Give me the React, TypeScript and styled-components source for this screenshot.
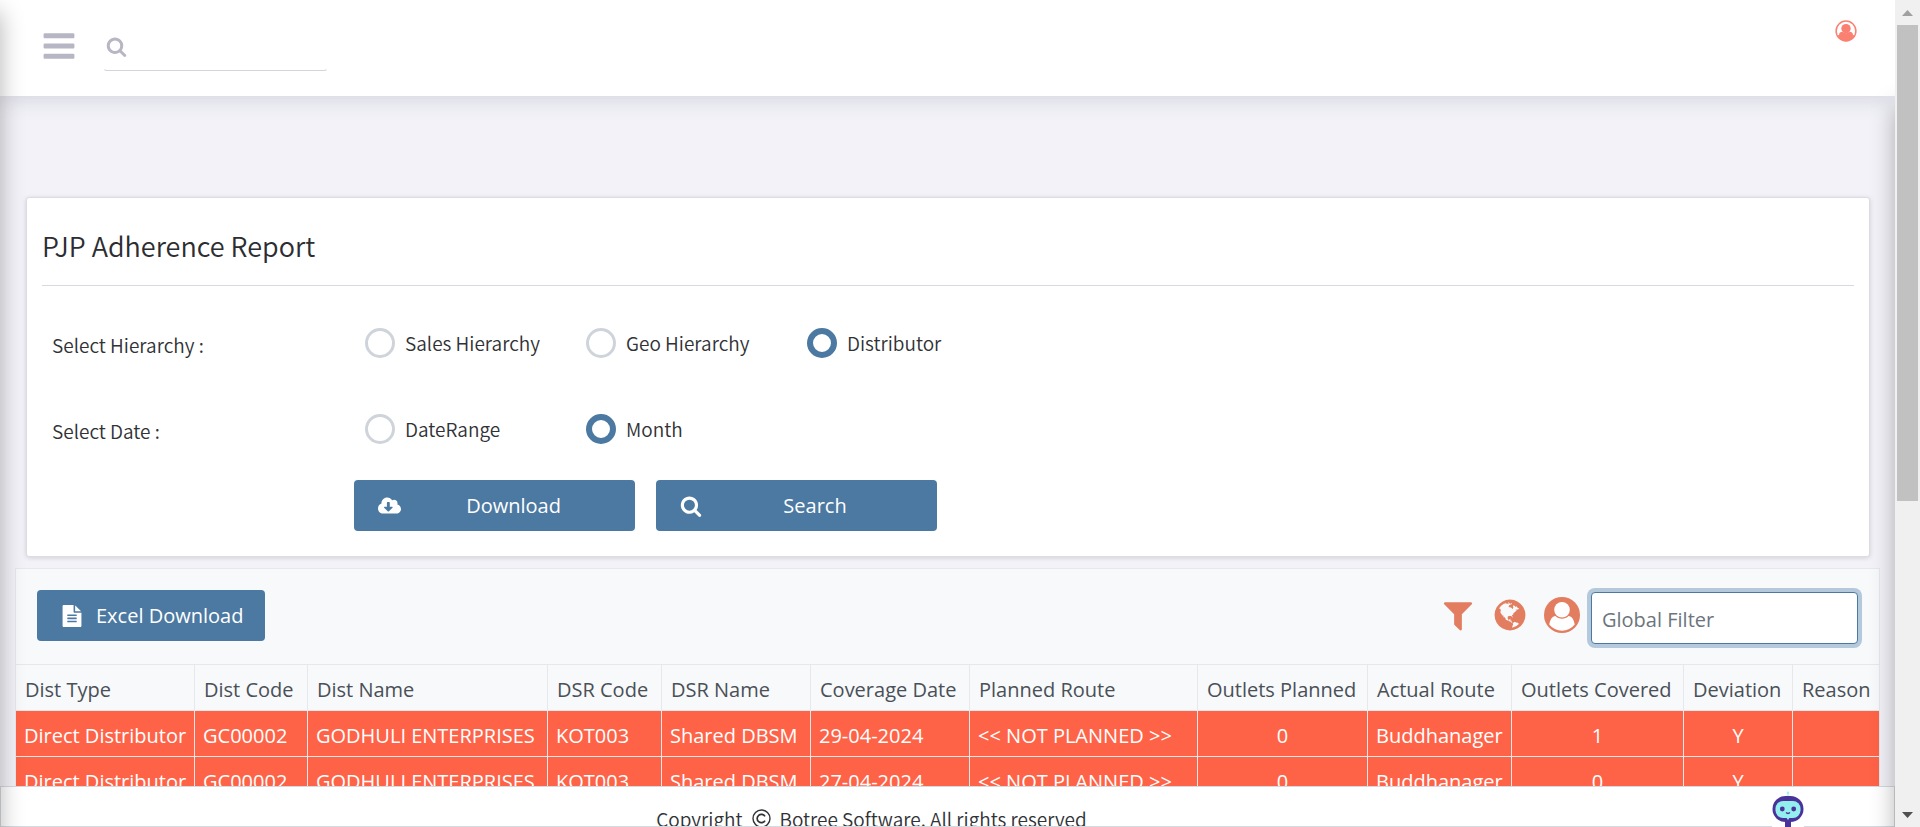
import React from 'react';
import styled, { createGlobalStyle, css } from 'styled-components';
import { FaCloudDownloadAlt } from 'react-icons/fa';

const ui = `"Open Sans", "Noto Sans", sans-serif`;
const light = `"Noto Sans CJK SC", "Noto Sans", sans-serif`;
const blue = '#4b79a1';
const coral = '#e37d5f';
const line = '#e6e8eb';

const GlobalStyle = createGlobalStyle`
  *, *::before, *::after { box-sizing: border-box; }
  body { margin: 0; font-family: ${ui}; font-size: 20px; color: #212529; background: #f2f2f8; }
  button, input { font: inherit; }
  svg { display: block; flex: none; }
`;

const Window = styled.div`
  display: flex;
  height: 100vh;
  overflow: hidden;
`;

const Page = styled.div`
  position: relative;
  flex: 1;
  min-width: 0;
  display: flex;
  flex-direction: column;
  overflow: hidden;
`;

const EdgeShade = styled.div<{ $side: 'left' | 'right' }>`
  position: absolute;
  z-index: 3;
  bottom: -40px;
  width: 40px;
  pointer-events: none;
  box-shadow: 0 0 24px rgba(0, 0, 0, 0.3);
  ${({ $side }) =>
    $side === 'left'
      ? css`
          left: -40px;
          top: 12px;
        `
      : css`
          right: -40px;
          top: 106px;
        `}
`;

const Header = styled.header`
  position: relative;
  z-index: 2;
  display: flex;
  align-items: flex-start;
  height: 96px;
  padding: 20px 38px 0 41px;
  background: #fff;
  box-shadow: 0 1px 22px rgba(69, 65, 100, 0.2);
`;

const IconButton = styled.button`
  padding: 0;
  border: 0;
  background: none;
  color: ${coral};
  cursor: pointer;
`;

const MenuButton = styled(IconButton)`
  margin-top: 8px;
  color: #b7b6c4;
`;

const ProfileButton = styled(IconButton)`
  margin-left: auto;
  color: #fa8072;
`;

const SearchBox = styled.label`
  display: flex;
  align-items: flex-end;
  width: 225px;
  height: 51px;
  margin-left: 26px;
  padding: 0 4px 13px 2px;
  border: 1px solid transparent;
  border-bottom-color: #d4d3de;
  border-radius: 4px;
  color: #b7b6c4;
`;

const SearchInput = styled.input`
  flex: 1;
  min-width: 0;
  height: 22px;
  padding: 0 8px;
  border: 0;
  outline: 0;
  background: none;
`;

const Main = styled.main`
  flex: 1;
  min-height: 0;
  overflow: hidden;
  padding: 101px 15px 0;
`;

const Card = styled.section`
  margin: 0 10px 11px 11px;
  padding: 15px 15px 25px;
  background: #fff;
  border: 1px solid #dcdce2;
  border-radius: 3px;
  box-shadow: 0 1px 5px rgba(0, 0, 0, 0.14);
`;

const Title = styled.h1`
  margin: 0 0 14px;
  padding-bottom: 6px;
  border-bottom: 1px solid #d8d9df;
  font: 350 27px/66px ${light};
  color: #2b2d31;
`;

const Field = styled.fieldset`
  display: flex;
  align-items: center;
  height: 86px;
  margin: 0;
  padding: 0 0 0 10px;
  border: 0;
  font: 350 19px/28px ${light};
  color: #303236;
`;

const FieldLabel = styled.span`
  width: 313px;
  padding-top: 4px;
`;

const Option = styled.label`
  display: flex;
  align-items: center;
  gap: 10px;
  width: 221px;
`;

const Radio = styled.input`
  appearance: none;
  width: 30px;
  height: 30px;
  margin: 0;
  border: 3px solid #ced4da;
  border-radius: 50%;
  background: #fff;
  &:checked {
    border: 6px solid ${blue};
  }
`;

const Actions = styled.div`
  display: flex;
  gap: 21px;
  margin: 8px 0 0 312px;
`;

const Button = styled.button<{ $wide?: boolean }>`
  display: flex;
  align-items: center;
  height: 51px;
  width: ${({ $wide }) => ($wide ? '281px' : 'auto')};
  padding: 0 22px 0 24px;
  border: 0;
  border-radius: 4px;
  background: ${blue};
  color: #fff;
  cursor: pointer;
`;

const ButtonLabel = styled.span`
  flex: 1;
  padding-left: 13px;
  text-align: center;
`;

const Panel = styled.section`
  background: #f8f9fb;
  border: 1px solid ${line};
`;

const Toolbar = styled.div`
  display: flex;
  align-items: center;
  height: 95px;
  padding: 0 21px 2px;
`;

const Tools = styled.div`
  display: flex;
  align-items: center;
  gap: 16px;
  margin: 0 11px 2px auto;
`;

const FilterInput = styled.input`
  width: 267px;
  height: 52px;
  margin-top: 4px;
  padding: 4px 10px 0;
  border: 1px solid ${blue};
  border-radius: 4px;
  outline: 0;
  background: #fff;
  box-shadow: 0 0 0 4px #b4c9dc;
  &::placeholder {
    color: #6c757d;
    opacity: 1;
  }
`;

const Table = styled.table`
  width: 100%;
  table-layout: fixed;
  border-collapse: separate;
  border-spacing: 0;
`;

const cell = css`
  height: 46px;
  padding: 4px 8px 0 9px;
  white-space: nowrap;
  border-right: 1px solid ${line};
  border-bottom: 1px solid ${line};
  &:last-child {
    border-right: 0;
  }
`;

const Th = styled.th`
  ${cell}
  border-top: 1px solid ${line};
  height: 47px;
  font-weight: 500;
  text-align: left;
  color: #495057;
`;

const Td = styled.td<{ $center?: boolean }>`
  ${cell}
  padding-left: 8px;
  background: #ff6347;
  color: #fff;
  text-align: ${({ $center }) => ($center ? 'center' : 'left')};
`;

const Footer = styled.footer`
  position: relative;
  z-index: 1;
  height: 41px;
  display: flex;
  justify-content: center;
  background: #fff;
  border: 1px solid #d5dade;
  padding: 18px 152px 0 0;
`;

const Copyright = styled.p`
  display: flex;
  align-items: flex-start;
  gap: 9px;
  height: 21px;
  margin: 0;
  overflow: hidden;
  font: 350 19px/27px ${light};
  color: #303236;
`;

const CopyrightMark = styled.span`
  display: flex;
  align-items: center;
  height: 27px;
`;

const Assistant = styled.button`
  position: absolute;
  right: 90px;
  bottom: -1px;
  padding: 0;
  border: 0;
  background: #fff;
`;

const ScrollTrack = styled.div`
  display: flex;
  flex-direction: column;
  align-items: center;
  width: 25px;
  background: #f0f0f0;
`;

const ScrollEnd = styled.div`
  display: grid;
  place-items: center;
  height: 25px;
`;

const ScrollThumb = styled.div`
  flex: 476;
  width: 21px;
  background: #c1c1c1;
`;

const ScrollRest = styled.div`
  flex: 301;
`;

const paths = {
  bars: 'M1664 1344v128q0 26-19 45t-45 19h-1408q-26 0-45-19t-19-45v-128q0-26 19-45t45-19h1408q26 0 45 19t19 45zm0-512v128q0 26-19 45t-45 19h-1408q-26 0-45-19t-19-45v-128q0-26 19-45t45-19h1408q26 0 45 19t19 45zm0-512v128q0 26-19 45t-45 19h-1408q-26 0-45-19t-19-45v-128q0-26 19-45t45-19h1408q26 0 45 19t19 45z',
  search:
    'M1216 832q0-185-131.5-316.5t-316.5-131.5-316.5 131.5-131.5 316.5 131.5 316.5 316.5 131.5 316.5-131.5 131.5-316.5zm512 832q0 52-38 90t-90 38q-54 0-90-38l-343-342q-179 124-399 124-143 0-273.5-55.5t-225-150-150-225-55.5-273.5 55.5-273.5 150-225 225-150 273.5-55.5 273.5 55.5 225 150 150 225 55.5 273.5q0 220-124 399l343 343q37 37 37 90z',
  file: 'M1596 476q14 14 28 36h-472v-472q22 14 36 28zm-476 164h544v1056q0 40-28 68t-68 28h-1344q-40 0-68-28t-28-68v-1600q0-40 28-68t68-28h800v544q0 40 28 68t68 28zm160 736v-64q0-14-9-23t-23-9h-704q-14 0-23 9t-9 23v64q0 14 9 23t23 9h704q14 0 23-9t9-23zm0-256v-64q0-14-9-23t-23-9h-704q-14 0-23 9t-9 23v64q0 14 9 23t23 9h704q14 0 23-9t9-23zm0-256v-64q0-14-9-23t-23-9h-704q-14 0-23 9t-9 23v64q0 14 9 23t23 9h704q14 0 23-9t9-23z',
  filter:
    'M1595 295q17 41-14 70l-493 493v742q0 42-39 59-13 5-25 5-27 0-45-19l-256-256q-19-19-19-45v-486l-493-493q-31-29-14-70 17-39 59-39h1280q42 0 59 39z',
  globe:
    'M896 128q209 0 385.5 103t279.5 279.5 103 385.5-103 385.5-279.5 279.5-385.5 103-385.5-103-279.5-279.5-103-385.5 103-385.5 279.5-279.5 385.5-103zm274 521q-2 1-9.5 9.5t-13.5 9.5q2 0 4.5-5t5-11 3.5-7q6-7 22-15 14-6 52-12 34-8 51 11-2-2 9.5-13t14.5-12q3-2 15-4.5t15-7.5l2-22q-12 1-17.5-7t-6.5-21q0 2-6 8 0-7-4.5-8t-11.5 1-9 1q-10-3-15-7.5t-8-16.5-4-15q-2-5-9.5-11t-9.5-10q-1-2-2.5-5.5t-3-6.5-4-5.5-5.5-2.5-7 5-7.5 10-4.5 5q-3-2-6-1.5t-4.5 1-4.5 3-5 3.5q-3 2-8.5 3t-8.5 2q15-5-1-11-10-4-16-3 9-4 7.5-12t-8.5-14h5q-1-4-8.5-8.5t-17.5-8.5-13-6q-8-5-34-9.5t-33-.5q-5 6-4.5 10.5t4 14 3.5 12.5q1 6-5.5 13t-6.5 12q0 7 14 15.5t10 21.5q-3 8-16 16t-16 12q-5 8-1.5 18.5t10.5 16.5q2 2 1.5 4t-3.5 4.5-5.5 4-6.5 3.5l-3 2q-11 5-20.5-6t-13.5-26q-7-25-16-30-23-8-29 1-5-13-41-26-25-9-58-4 6-1 0-15-7-15-19-12 3-6 4-17.5t1-13.5q3-13 12-23 1-1 7-8.5t9.5-13.5.5-6q35 4 50-11 5-5 11.5-17t10.5-17q9-6 14-5.5t14.5 5.5 14.5 5q14 1 15.5-11t-7.5-20q12 1 3-17-4-7-8-9-12-4-27 5-8 4 2 8-1-1-9.5 10.5t-16.5 17.5-16-5q-1-1-5.5-13.5t-9.5-13.5q-8 0-16 15 3-8-11-15t-24-8q19-12-8-27-7-4-20.5-5t-19.5 4q-5 7-5.5 11.5t5 8 10.5 5.5 11.5 4 8.5 3q14 10 8 14-2 1-8.5 3.5t-11.5 4.5-6 4q-3 4 0 14t-2 14q-5-5-9-17.5t-7-16.5q7 9-25 6l-10-1q-4 0-16 2t-20.5 1-13.5-8q-4-8 0-20 1-4 4-2-4-3-11-9.5t-10-8.5q-46 15-94 41 6 1 12-1 5-2 13-6.5t10-5.5q34-14 42-7l5-5q14 16 20 25-7-4-30-1-20 6-22 12 7 12 5 18-4-3-11.5-10t-14.5-11-15-5q-16 0-22 1-146 80-235 222 7 7 12 8 4 1 5 9t2.5 11 11.5-3q9 8 3 19 1-1 44 27 19 17 21 21 3 11-10 18-1-2-9-9t-9-4q-3 5 .5 18.5t10.5 12.5q-7 0-9.5 16t-2.5 35.5-1 23.5l2 1q-3 12 5.5 34.5t21.5 19.5q-13 3 20 43 6 8 8 9 3 2 12 7.5t15 10 10 10.5q4 5 10 22.5t14 23.5q-2 6 9.5 20t10.5 23q-1 0-2.5 1t-2.5 1q3 7 15.5 14t15.5 13q1 3 2 10t3 11 8 2q2-20-24-62-15-25-17-29-3-5-5.5-15.5t-4.5-14.5q2 0 6 1.5t8.5 3.5 7.5 4 2 3q-3 7 2 17.5t12 18.5 17 19 12 13q6 6 14 19.5t0 13.5q9 0 20 10.5t17 19.5q5 8 8 26t5 24q2 7 8.5 13.5t12.5 9.5l16 8 13 7q5 2 18.5 10.5t21.5 11.5q10 4 16 4t14.5-2.5 13.5-3.5q15-2 29 15t21 21q36 19 55 11-2 1 .5 7.5t8 15.5 9 14.5 5.5 8.5q5 6 18 15t18 15q6-4 7-9-3 8 7 20t18 10q14-3 14-32-31 15-49-18 0-1-2.5-5.5t-4-8.5-2.5-8.5 0-7.5 5-3q9 0 10-3.5t-2-12.5-4-13q-1-8-11-20t-12-15q-5 9-16 8t-16-9q0 1-1.5 5.5t-1.5 6.5q-13 0-15-1 1-3 2.5-17.5t3.5-22.5q1-4 5.5-12t7.5-14.5 4-12.5-4.5-9.5-17.5-2.5q-19 1-26 20-1 3-3 10.5t-5 11.5-9 7q-7 3-24 2t-24-5q-13-8-22.5-29t-9.5-37q0-10 2.5-26.5t3-25-5.5-24.5q3-2 9-9.5t10-10.5q2-1 4.5-1.5t4.5 0 4-1.5 3-6q-1-1-4-3-3-3-4-3 7 3 28.5-1.5t27.5 1.5q15 11 22-2 0-1-2.5-9.5t-.5-13.5q5 27 29 9 3 3 15.5 5t17.5 5q3 2 7 5.5t5.5 4.5 5-.5 8.5-6.5q10 14 12 24 11 40 19 44 7 3 11 2t4.5-9.5 0-14-1.5-12.5l-1-8v-18l-1-8q-15-3-18.5-12t1.5-18.5 15-18.5q1-1 8-3.5t15.5-6.5 12.5-8q21-19 15-35 7 0 11-9-1 0-5-3t-7.5-5-4.5-2q9-5 2-16 5-3 7.5-11t7.5-10q9 12 21 2 7-8 1-16 5-7 20.5-10.5t18.5-9.5q7 2 8-2t1-12 3-12q4-5 15-9t13-5l17-11q3-4 0-4 18 2 31-11 10-11-6-20 3-6-3-9.5t-15-5.5q3-1 11.5-.5t10.5-1.5q15-10-7-16-17-5-43 12zm-163 877q206-36 351-189-3-3-12.5-4.5t-12.5-3.5q-18-7-24-8 1-7-2.5-13t-8-9-12.5-8-11-7q-2-2-7-6t-7-5.5-7.5-4.5-8.5-2-10 1l-3 1q-3 1-5.5 2.5t-5.5 3-4 3 0 2.5q-21-17-36-22-5-1-11-5.5t-10.5-7-10-1.5-11.5 7q-5 5-6 15t-2 13q-7-5 0-17.5t2-18.5q-3-6-10.5-4.5t-12 4.5-11.5 8.5-9 6.5-8.5 5.5-8.5 7.5q-3 4-6 12t-5 11q-2-4-11.5-6.5t-9.5-5.5q2 10 4 35t5 38q7 31-12 48-27 25-29 40-4 22 12 26 0 7-8 20.5t-7 21.5q0 6 2 16z',
};

const Icon = ({ name, size }: { name: keyof typeof paths; size: number }) => (
  <svg width={size} height={size} viewBox="0 0 1792 1792" fill="currentColor" aria-hidden="true">
    <path d={paths[name]} />
  </svg>
);

const UserCircleIcon = () => (
  <svg width="36" height="36" viewBox="0 0 36 36" aria-hidden="true">
    <circle cx="18" cy="18" r="18" fill="currentColor" />
    <path
      d="M5.3 27.4C6 22.6 8.2 19.2 11.4 18.9 15 22.6 21 22.6 24.6 18.9 27.8 19.2 30 22.6 30.7 27.4A16 16 0 0 1 5.3 27.4Z"
      fill="#fff"
    />
    <circle cx="18" cy="12.8" r="7.8" fill="#fff" />
  </svg>
);

const ProfileIcon = () => (
  <svg width="22" height="22" viewBox="0 0 22 22" aria-hidden="true">
    <circle cx="11" cy="11" r="9.9" fill="none" stroke="currentColor" strokeWidth="1.5" />
    <path
      d="M4 15C4.2 12.9 5.4 11.9 7.4 11.8 9.6 13.6 12.4 13.6 14.6 11.8 16.6 11.9 17.8 12.9 18 15L20 15.5A10 10 0 0 1 2 15.5Z"
      fill="currentColor"
    />
    <circle cx="11" cy="8.6" r="4.7" fill="currentColor" />
  </svg>
);

const CopyrightIcon = () => (
  <svg width="19" height="19" viewBox="0 0 19 19" fill="none" stroke="currentColor" aria-hidden="true">
    <circle cx="9.5" cy="9.5" r="8.5" strokeWidth="1.4" />
    <path d="M13 7.4A4.2 4.2 0 1 0 13 11.6" strokeWidth="1.7" />
  </svg>
);

const RobotIcon = () => (
  <svg width="32" height="36" viewBox="0 0 32 36" aria-hidden="true">
    <path d="M16 2v5" stroke="#9df1ef" strokeWidth="1.2" />
    <circle cx="16" cy="1.8" r="1.3" fill="#9df1ef" />
    <rect x="0.5" y="5" width="31" height="26" rx="13" fill="#4a329b" />
    <rect x="13" y="28" width="6" height="8" fill="#4a329b" />
    <rect x="3.5" y="10" width="25" height="17" rx="7.5" fill="#93efee" />
    <path d="M14 26h4l-2 3z" fill="#93efee" />
    <circle cx="10.3" cy="18" r="2.4" fill="#4a329b" />
    <circle cx="21.7" cy="18" r="2.4" fill="#4a329b" />
    <path d="M14 21.5q2 1.8 4 0" stroke="#4a329b" strokeWidth="1.4" fill="none" />
  </svg>
);

const columns = [
  { name: 'Dist Type', width: 179 },
  { name: 'Dist Code', width: 113 },
  { name: 'Dist Name', width: 240 },
  { name: 'DSR Code', width: 114 },
  { name: 'DSR Name', width: 149 },
  { name: 'Coverage Date', width: 159 },
  { name: 'Planned Route', width: 228 },
  { name: 'Outlets Planned', width: 170, center: true },
  { name: 'Actual Route', width: 144 },
  { name: 'Outlets Covered', width: 172, center: true },
  { name: 'Deviation', width: 109, center: true },
  { name: 'Reason', width: 86 },
];

const visit = (date: string, covered: string) => [
  'Direct Distributor', 'GC00002', 'GODHULI ENTERPRISES', 'KOT003', 'Shared DBSM', date,
  '<< NOT PLANNED >>', '0', 'Buddhanager', covered, 'Y', '',
];

const rows = [visit('29-04-2024', '1'), visit('27-04-2024', '0')];

const RadioField = ({ label, name, options, initial }: { label: string; name: string; options: string[]; initial: string }) => (
  <Field aria-labelledby={`${name}-label`}>
    <FieldLabel id={`${name}-label`}>{label}</FieldLabel>
    {options.map((option) => (
      <Option key={option}>
        <Radio type="radio" name={name} value={option} defaultChecked={option === initial} />
        {option}
      </Option>
    ))}
  </Field>
);

export default function App() {
  return (
    <Window>
      <GlobalStyle />
      <Page>
        <EdgeShade $side="left" />
        <EdgeShade $side="right" />
        <Header>
          <MenuButton type="button" aria-label="Menu">
            <Icon name="bars" size={36} />
          </MenuButton>
          <SearchBox>
            <Icon name="search" size={21} />
            <SearchInput type="text" aria-label="Search menu" />
          </SearchBox>
          <ProfileButton type="button" aria-label="Profile">
            <ProfileIcon />
          </ProfileButton>
        </Header>
        <Main>
          <Card>
            <Title>PJP Adherence Report</Title>
            <RadioField label="Select Hierarchy :" name="hierarchy" options={['Sales Hierarchy', 'Geo Hierarchy', 'Distributor']} initial="Distributor" />
            <RadioField label="Select Date :" name="date" options={['DateRange', 'Month']} initial="Month" />
            <Actions>
              <Button type="button" $wide>
                <FaCloudDownloadAlt size={23} />
                <ButtonLabel>Download</ButtonLabel>
              </Button>
              <Button type="button" $wide>
                <Icon name="search" size={22} />
                <ButtonLabel>Search</ButtonLabel>
              </Button>
            </Actions>
          </Card>
          <Panel>
            <Toolbar>
              <Button type="button">
                <Icon name="file" size={22} />
                <ButtonLabel>Excel Download</ButtonLabel>
              </Button>
              <Tools>
                <IconButton type="button" aria-label="Filter">
                  <Icon name="filter" size={36} />
                </IconButton>
                <IconButton type="button" aria-label="Region">
                  <Icon name="globe" size={36} />
                </IconButton>
                <IconButton type="button" aria-label="User">
                  <UserCircleIcon />
                </IconButton>
              </Tools>
              <FilterInput type="text" placeholder="Global Filter" aria-label="Global Filter" />
            </Toolbar>
            <Table>
              <colgroup>
                {columns.map((c) => (
                  <col key={c.name} width={c.width} />
                ))}
              </colgroup>
              <thead>
                <tr>
                  {columns.map((c) => (
                    <Th key={c.name} scope="col">{c.name}</Th>
                  ))}
                </tr>
              </thead>
              <tbody>
                {rows.map((row) => (
                  <tr key={row[5]}>
                    {row.map((value, i) => (
                      <Td key={columns[i].name} $center={columns[i].center}>{value}</Td>
                    ))}
                  </tr>
                ))}
              </tbody>
            </Table>
          </Panel>
        </Main>
        <Footer>
          <Copyright>
            Copyright
            <CopyrightMark>
              <CopyrightIcon />
            </CopyrightMark>
            Botree Software. All rights reserved
          </Copyright>
          <Assistant type="button" aria-label="Assistant">
            <RobotIcon />
          </Assistant>
        </Footer>
      </Page>
      <ScrollTrack aria-hidden="true">
        <ScrollEnd>
          <svg width="11" height="6" viewBox="0 0 11 6"><path d="M5.5 0 11 6H0z" fill="#a0a0a0" /></svg>
        </ScrollEnd>
        <ScrollThumb />
        <ScrollRest />
        <ScrollEnd>
          <svg width="11" height="6" viewBox="0 0 11 6"><path d="M0 0h11L5.5 6z" fill="#505050" /></svg>
        </ScrollEnd>
      </ScrollTrack>
    </Window>
  );
}
